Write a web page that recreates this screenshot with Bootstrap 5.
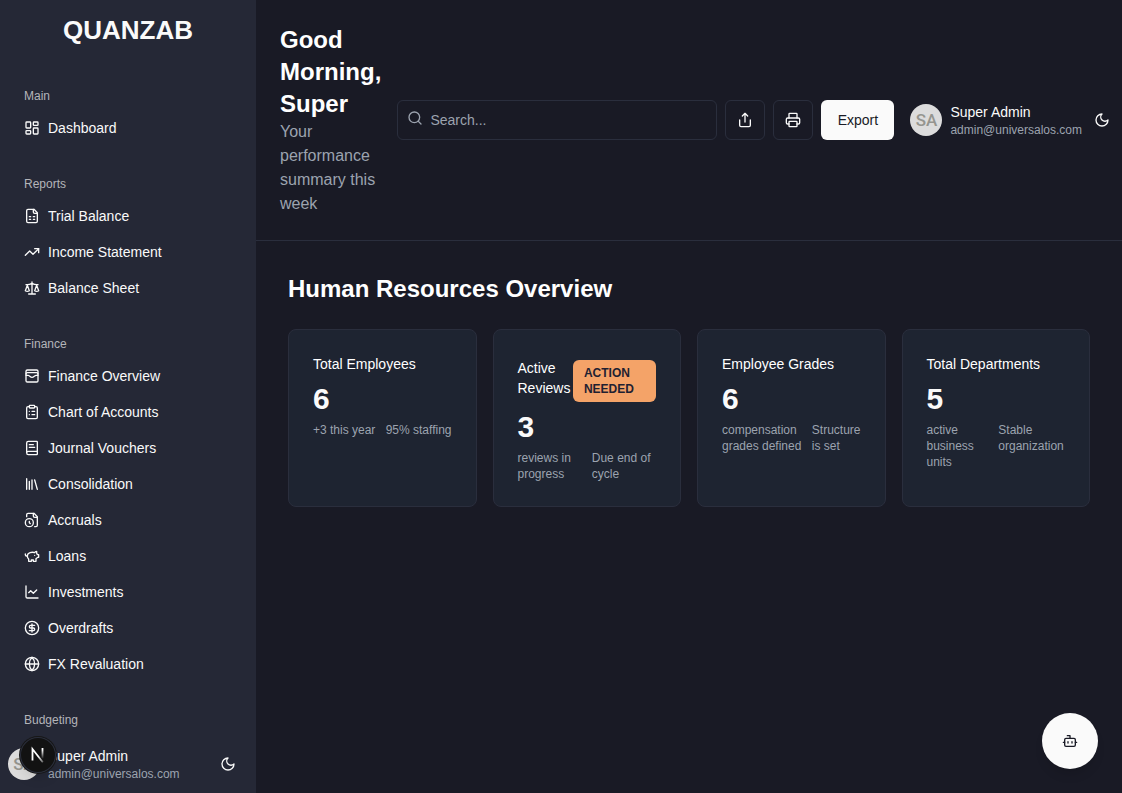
<!DOCTYPE html>
<html lang="en" data-bs-theme="dark">
<head>
<meta charset="utf-8">
<meta name="viewport" content="width=device-width, initial-scale=1">
<title>Quanzab – Human Resources Overview</title>
<link href="https://cdn.jsdelivr.net/npm/bootstrap@5.3.0/dist/css/bootstrap.min.css" rel="stylesheet">
<style>
  :root {
    --page: #191a25;
    --side: #252836;
    --panel: #1e2431;
    --line: #2a2e3d;
    --text: #fafafa;
    --muted: #9ca3af;
  }
  body { background: var(--page); color: var(--text); font-family: "Liberation Sans", Arial, sans-serif; font-size: 14px; line-height: 20px; }
  .ico { width: 16px; height: 16px; flex: none; fill: none; stroke: currentColor; stroke-width: 2; stroke-linecap: round; stroke-linejoin: round; }
  .text-dim { color: var(--muted); }

  .side-panel { width: 256px; background: var(--side); }
  .brand { height: 72px; padding-top: 14px; font-size: 26px; line-height: 32px; font-weight: 700; color: var(--text); }
  .side-scroll { flex: 1 1 0; min-height: 0; overflow: hidden; }
  .side-label { height: 32px; font-size: 12px; line-height: 32px; font-weight: 400; color: #b4b5ba; }
  .side-link { height: 32px; color: var(--text); text-decoration: none; }
  .side-link:hover { color: #fff; }
  .side-foot { padding: 4px 16px 10px 8px; }

  .user-avatar { width: 32px; height: 32px; background: #dcdcdc; color: #95958f; font: 500 17px/32px Roboto, sans-serif; }
  .user-text { padding-top: 2px; }
  .user-name { line-height: 18px; }
  .user-mail { font-size: 12px; line-height: 18px; color: var(--muted); }
  .btn-bare { color: var(--text); background: none; border: 0; padding: 0; display: flex; }

  .top-bar { padding: 24px 12px 24px 24px; border-bottom: 1px solid var(--line); }
  .greeting { width: min-content; flex: 1 1 0; }
  .page-title { font-size: 24px; line-height: 32px; font-weight: 700; margin: 0; }
  .greeting p { font-size: 16px; line-height: 24px; }
  .search-box { width: 320px; }
  .search-box .ico { position: absolute; left: 10px; top: 10px; color: var(--muted); }
  .search-box .form-control { height: 40px; padding: 8px 12px 8px 32px; font-size: 14px; background: transparent; border-color: var(--line); border-radius: 6px; color: var(--text); }
  .search-box .form-control::placeholder { color: var(--muted); opacity: 1; }
  .btn-square { width: 40px; height: 40px; border: 1px solid var(--line); border-radius: 6px; color: var(--text); padding: 0; }
  .btn-export { min-width: 73px; height: 40px; padding: 0 16px; font-size: 14px; border: 0; border-radius: 6px; background: var(--text); color: #191a25; }
  .btn-export:hover { background: #e4e4e7; color: #191a25; }

  .stat-grid { display: grid; grid-template-columns: repeat(4, minmax(0, 1fr)); gap: 16px; }
  .stat-card { background: var(--panel); border: 1px solid var(--line); border-radius: 8px; padding: 24px; }
  .stat-name { font-size: 14px; line-height: 20px; font-weight: 400; margin: 0; flex: 1 1 0; }
  .stat-value { font-size: 30px; line-height: 36px; font-weight: 700; margin: 7px 0 5px; }
  .stat-meta { font-size: 12px; line-height: 16px; color: var(--muted); }
  .alert-tag { flex: 0 0 60%; margin-top: 6px; padding: 5px 11px; border-radius: 6px; background: #f4a368; color: #1f2131; font-size: 12px; line-height: 16px; font-weight: 700; }

  .chat-button { position: fixed; right: 24px; bottom: 24px; width: 56px; height: 56px; background: var(--text); color: #191a25; border: 0; padding: 0; box-shadow: 0 8px 12px -4px rgba(0, 0, 0, .15); }
  .dev-button { position: fixed; left: 20px; bottom: 20px; width: 36px; height: 36px; background: #121212; border: 0; padding: 0; box-shadow: 0 0 0 1px #171717, inset 0 0 0 1px #2b2f3d, 0 8px 16px -8px rgba(0, 0, 0, .3); }
</style>
</head>
<body>
<svg class="d-none" aria-hidden="true">
  <symbol id="i-moon" viewBox="0 0 24 24"><path d="M12 3a6 6 0 0 0 9 9 9 9 0 1 1-9-9Z"/></symbol>
</svg>

<div class="d-flex vh-100 overflow-hidden">
  <aside class="side-panel d-flex flex-column flex-shrink-0">
    <div class="brand text-center">QUANZAB</div>
    <nav class="side-scroll d-flex flex-column gap-4 px-4 pt-2" aria-label="Sections">
      <section>
        <h2 class="side-label m-0">Main</h2>
        <a href="#" class="side-link d-flex align-items-center gap-2"><svg class="ico" viewBox="0 0 24 24"><rect width="7" height="9" x="3" y="3" rx="1"/><rect width="7" height="5" x="14" y="3" rx="1"/><rect width="7" height="9" x="14" y="12" rx="1"/><rect width="7" height="5" x="3" y="16" rx="1"/></svg>Dashboard</a>
      </section>
      <section>
        <h2 class="side-label m-0">Reports</h2>
        <div class="d-flex flex-column gap-1">
          <a href="#" class="side-link d-flex align-items-center gap-2"><svg class="ico" viewBox="0 0 24 24"><path d="M15 2H6a2 2 0 0 0-2 2v16a2 2 0 0 0 2 2h12a2 2 0 0 0 2-2V7Z"/><path d="M14 2v4a2 2 0 0 0 2 2h4M8 13h2M14 13h2M8 17h2M14 17h2"/></svg>Trial Balance</a>
          <a href="#" class="side-link d-flex align-items-center gap-2"><svg class="ico" viewBox="0 0 24 24"><path d="M22 7l-8.500 8.500-5-5L2 17"/><path d="M16 7h6v6"/></svg>Income Statement</a>
          <a href="#" class="side-link d-flex align-items-center gap-2"><svg class="ico" viewBox="0 0 24 24"><path d="m16 16 3-8 3 8c-.87.65-1.920 1-3 1s-2.130-.35-3-1Z"/><path d="m2 16 3-8 3 8c-.87.65-1.920 1-3 1s-2.130-.35-3-1Z"/><path d="M7 21h10M12 3v18M3 7h2c2 0 5-1 7-2 2 1 5 2 7 2h2"/></svg>Balance Sheet</a>
        </div>
      </section>
      <section>
        <h2 class="side-label m-0">Finance</h2>
        <div class="d-flex flex-column gap-1">
          <a href="#" class="side-link d-flex align-items-center gap-2"><svg class="ico" viewBox="0 0 24 24"><rect width="18" height="18" x="3" y="3" rx="2"/><path d="M3 9a2 2 0 0 1 2-2h14a2 2 0 0 1 2 2"/><path d="M3 11h3c.8 0 1.600.3 2.100.9l1.100.9c1.600 1.600 4.100 1.600 5.700 0l1.100-.9c.5-.5 1.300-.9 2.100-.9H21"/></svg>Finance Overview</a>
          <a href="#" class="side-link d-flex align-items-center gap-2"><svg class="ico" viewBox="0 0 24 24"><rect width="8" height="4" x="8" y="2" rx="1"/><path d="M16 4h2a2 2 0 0 1 2 2v14a2 2 0 0 1-2 2H6a2 2 0 0 1-2-2V6a2 2 0 0 1 2-2h2M12 11h4M12 16h4M8 11h.01M8 16h.01"/></svg>Chart of Accounts</a>
          <a href="#" class="side-link d-flex align-items-center gap-2"><svg class="ico" viewBox="0 0 24 24"><path d="M4 19.500v-15A2.500 2.500 0 0 1 6.500 2H19a1 1 0 0 1 1 1v18a1 1 0 0 1-1 1H6.500a1 1 0 0 1 0-5H20M8 11h8M8 7h6"/></svg>Journal Vouchers</a>
          <a href="#" class="side-link d-flex align-items-center gap-2"><svg class="ico" viewBox="0 0 24 24"><path d="m16 6 4 14M12 6v14M8 8v12M4 4v16"/></svg>Consolidation</a>
          <a href="#" class="side-link d-flex align-items-center gap-2"><svg class="ico" viewBox="0 0 24 24"><path d="M16 22h2a2 2 0 0 0 2-2V7l-5-5H6a2 2 0 0 0-2 2v3"/><path d="M14 2v4a2 2 0 0 0 2 2h4"/><circle cx="8" cy="16" r="6"/><path d="M9.500 17.500 8 16.250V14"/></svg>Accruals</a>
          <a href="#" class="side-link d-flex align-items-center gap-2"><svg class="ico" viewBox="0 0 24 24"><path d="M19 5c-1.500 0-2.800 1.400-3 2-3.500-1.500-11-.3-11 5 0 1.800 0 3 2 4.500V20h4v-2h3v2h4v-4c1-.5 1.700-1 2-2h2v-4h-2c0-1-.5-1.500-1-2V5z"/><path d="M2 9v1c0 1.100.9 2 2 2h1M16 11h.01"/></svg>Loans</a>
          <a href="#" class="side-link d-flex align-items-center gap-2"><svg class="ico" viewBox="0 0 24 24"><path d="M3 3v16a2 2 0 0 0 2 2h16"/><path d="m19 9-5 5-4-4-3 3"/></svg>Investments</a>
          <a href="#" class="side-link d-flex align-items-center gap-2"><svg class="ico" viewBox="0 0 24 24"><circle cx="12" cy="12" r="10"/><path d="M16 8h-6a2 2 0 1 0 0 4h4a2 2 0 1 1 0 4H8M12 18V6"/></svg>Overdrafts</a>
          <a href="#" class="side-link d-flex align-items-center gap-2"><svg class="ico" viewBox="0 0 24 24"><circle cx="12" cy="12" r="10"/><path d="M12 2a14.500 14.500 0 0 0 0 20 14.500 14.500 0 0 0 0-20M2 12h20"/></svg>FX Revaluation</a>
        </div>
      </section>
      <section>
        <h2 class="side-label m-0">Budgeting</h2>
      </section>
    </nav>
    <div class="side-foot d-flex align-items-center gap-2">
      <span class="user-avatar rounded-circle text-center flex-shrink-0">SA</span>
      <div class="user-text flex-grow-1">
        <div class="user-name">Super Admin</div>
        <div class="user-mail">admin@universalos.com</div>
      </div>
      <button type="button" class="btn-bare me-1" aria-label="Toggle theme"><svg class="ico"><use href="#i-moon"/></svg></button>
    </div>
  </aside>

  <div class="flex-grow-1 overflow-auto">
    <header class="top-bar d-flex align-items-center gap-3">
      <div class="greeting">
        <h1 class="page-title">Good Morning, Super</h1>
        <p class="text-dim m-0">Your performance summary this week</p>
      </div>
      <div class="d-flex align-items-center gap-2 flex-shrink-0">
        <div class="search-box position-relative">
          <svg class="ico" viewBox="0 0 24 24"><circle cx="11" cy="11" r="8"/><path d="m21 21-4.300-4.300"/></svg>
          <input type="search" class="form-control" placeholder="Search..." aria-label="Search">
        </div>
        <button type="button" class="btn btn-square d-flex align-items-center justify-content-center" aria-label="Share"><svg class="ico" viewBox="0 0 24 24"><path d="M4 12v8a2 2 0 0 0 2 2h12a2 2 0 0 0 2-2v-8M16 6l-4-4-4 4M12 2v13"/></svg></button>
        <button type="button" class="btn btn-square d-flex align-items-center justify-content-center" aria-label="Print"><svg class="ico" viewBox="0 0 24 24"><path d="M6 18H4a2 2 0 0 1-2-2v-5a2 2 0 0 1 2-2h16a2 2 0 0 1 2 2v5a2 2 0 0 1-2 2h-2"/><path d="M6 9V3a1 1 0 0 1 1-1h10a1 1 0 0 1 1 1v6"/><rect width="12" height="8" x="6" y="14" rx="1"/></svg></button>
        <button type="button" class="btn btn-export">Export</button>
        <span class="user-avatar rounded-circle text-center flex-shrink-0 ms-2">SA</span>
        <div class="user-text">
          <div class="user-name">Super Admin</div>
          <div class="user-mail">admin@universalos.com</div>
        </div>
        <button type="button" class="btn-bare ms-1" aria-label="Toggle theme"><svg class="ico"><use href="#i-moon"/></svg></button>
      </div>
    </header>

    <main class="d-flex flex-column gap-4 p-4 m-2">
      <h2 class="page-title">Human Resources Overview</h2>
      <div class="stat-grid">
        <article class="stat-card">
          <h3 class="stat-name">Total Employees</h3>
          <div class="stat-value">6</div>
          <div class="stat-meta d-flex justify-content-between"><span>+3 this year</span><span>95% staffing</span></div>
        </article>
        <article class="stat-card">
          <div class="d-flex align-items-center"><h3 class="stat-name">Active Reviews</h3><span class="alert-tag">ACTION NEEDED</span></div>
          <div class="stat-value">3</div>
          <div class="stat-meta d-flex justify-content-between"><span>reviews in progress</span><span>Due end of cycle</span></div>
        </article>
        <article class="stat-card">
          <h3 class="stat-name">Employee Grades</h3>
          <div class="stat-value">6</div>
          <div class="stat-meta d-flex justify-content-between"><span>compensation grades defined</span><span>Structure is set</span></div>
        </article>
        <article class="stat-card">
          <h3 class="stat-name">Total Departments</h3>
          <div class="stat-value">5</div>
          <div class="stat-meta d-flex justify-content-between"><span>active business units</span><span>Stable organization</span></div>
        </article>
      </div>
    </main>
  </div>
</div>

<button type="button" class="chat-button rounded-circle d-flex align-items-center justify-content-center" aria-label="Open assistant"><svg class="ico" viewBox="0 0 24 24"><path d="M12 8V4H8"/><rect width="16" height="12" x="4" y="8" rx="2"/><path d="M2 14h2M20 14h2M15 13v2M9 13v2"/></svg></button>

<button type="button" class="dev-button rounded-circle d-flex align-items-center justify-content-center" aria-label="Developer tools">
  <svg width="36" height="36" viewBox="0 0 36 36" fill="none" aria-hidden="true">
    <defs>
      <linearGradient id="fade-stem" gradientUnits="userSpaceOnUse" x1="0" y1="13" x2="0" y2="22"><stop stop-color="#fff"/><stop offset="1" stop-color="#fff" stop-opacity="0"/></linearGradient>
      <linearGradient id="fade-slash" gradientUnits="userSpaceOnUse" x1="19" y1="19" x2="25" y2="27"><stop stop-color="#fff"/><stop offset="1" stop-color="#fff" stop-opacity="0.100"/></linearGradient>
    </defs>
    <path d="M12.500 23.500V12L22.800 25.200" stroke="url(#fade-slash)" stroke-width="1.800"/>
    <path d="M22.500 11v10.500" stroke="url(#fade-stem)" stroke-width="1.800"/>
  </svg>
</button>
<script src="https://cdn.jsdelivr.net/npm/bootstrap@5.3.0/dist/js/bootstrap.bundle.min.js"></script>
</body>
</html>
